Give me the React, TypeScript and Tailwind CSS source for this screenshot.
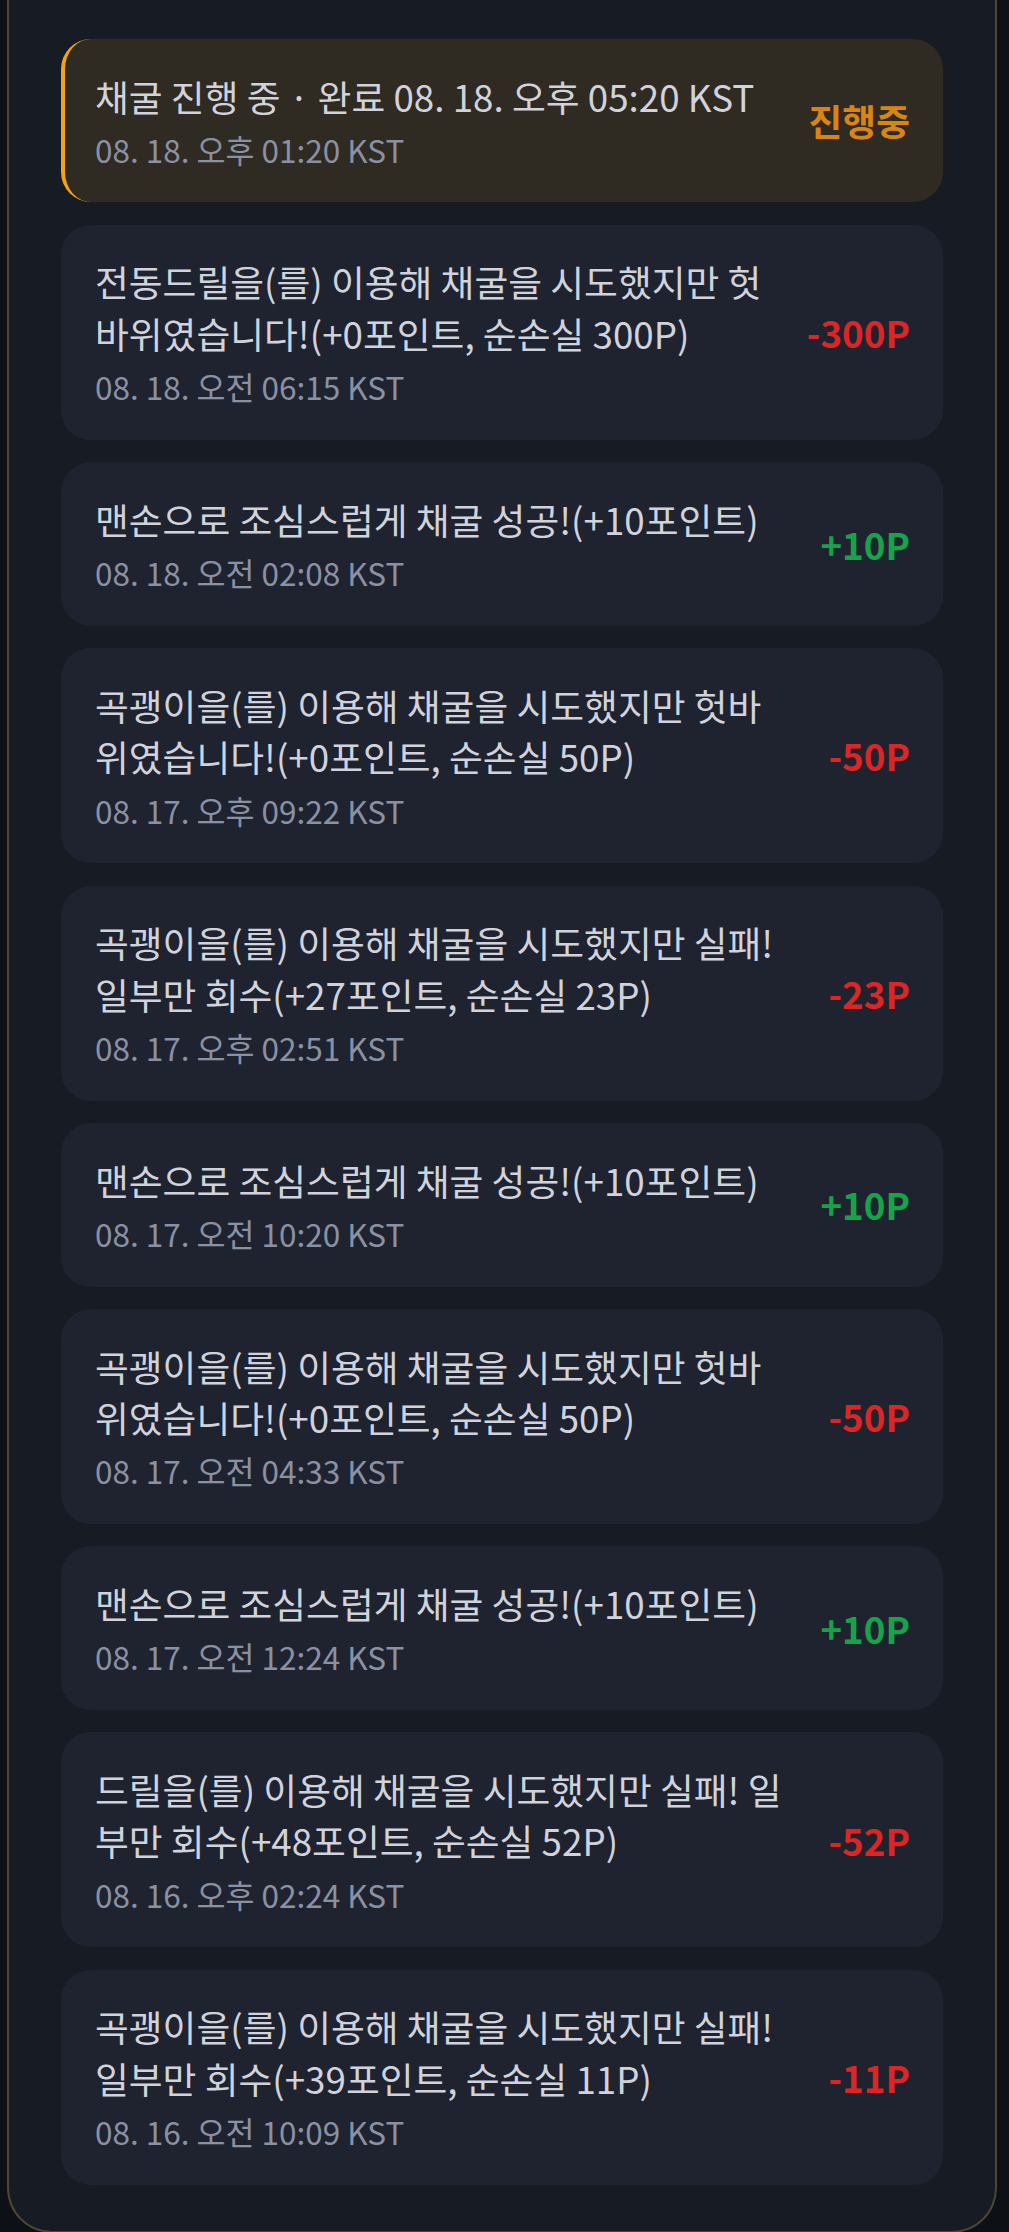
type Entry = {
  text: string
  date: string
  value: string
  kind: 'loss' | 'gain' | 'active'
}

const ENTRIES: Entry[] = [
  { text: '채굴 진행 중 · 완료 08. 18. 오후 05:20 KST', date: '08. 18. 오후 01:20 KST', value: '진행중', kind: 'active' },
  { text: '전동드릴을(를) 이용해 채굴을 시도했지만 헛바위였습니다!(+0포인트, 순손실 300P)', date: '08. 18. 오전 06:15 KST', value: '-300P', kind: 'loss' },
  { text: '맨손으로 조심스럽게 채굴 성공!(+10포인트)', date: '08. 18. 오전 02:08 KST', value: '+10P', kind: 'gain' },
  { text: '곡괭이을(를) 이용해 채굴을 시도했지만 헛바위였습니다!(+0포인트, 순손실 50P)', date: '08. 17. 오후 09:22 KST', value: '-50P', kind: 'loss' },
  { text: '곡괭이을(를) 이용해 채굴을 시도했지만 실패! 일부만 회수(+27포인트, 순손실 23P)', date: '08. 17. 오후 02:51 KST', value: '-23P', kind: 'loss' },
  { text: '맨손으로 조심스럽게 채굴 성공!(+10포인트)', date: '08. 17. 오전 10:20 KST', value: '+10P', kind: 'gain' },
  { text: '곡괭이을(를) 이용해 채굴을 시도했지만 헛바위였습니다!(+0포인트, 순손실 50P)', date: '08. 17. 오전 04:33 KST', value: '-50P', kind: 'loss' },
  { text: '맨손으로 조심스럽게 채굴 성공!(+10포인트)', date: '08. 17. 오전 12:24 KST', value: '+10P', kind: 'gain' },
  { text: '드릴을(를) 이용해 채굴을 시도했지만 실패! 일부만 회수(+48포인트, 순손실 52P)', date: '08. 16. 오후 02:24 KST', value: '-52P', kind: 'loss' },
  { text: '곡괭이을(를) 이용해 채굴을 시도했지만 실패! 일부만 회수(+39포인트, 순손실 11P)', date: '08. 16. 오전 10:09 KST', value: '-11P', kind: 'loss' },
]

const VALUE_COLOR: Record<Entry['kind'], string> = {
  loss: 'text-[#dc2626]',
  gain: 'text-[#16a34a]',
  active: 'text-[#d98512]',
}

function LogCard({ entry }: { entry: Entry }) {
  const active = entry.kind === 'active'
  return (
    <div
      className={`flex items-center justify-between gap-[42px] rounded-[30px] pr-[33px] pt-[31.5px] pb-[31.5px] ${
        active ? 'bg-[#2f2a22] border-l-4 border-[#f5a316] pl-[30px]' : 'bg-[#1f2330] pl-[34px]'
      }`}
    >
      <div className="min-w-0 flex-1">
        <p className="text-[36.75px] leading-[51.45px] text-[#d0d3db]">{entry.text}</p>
        <p className="mt-[5px] text-[31.5px] leading-[44px] text-[#8a91a3]">{entry.date}</p>
      </div>
      <span className={`shrink-0 text-[36.75px] font-bold leading-none ${VALUE_COLOR[entry.kind]}`}>
        {entry.value}
      </span>
    </div>
  )
}

export default function App() {
  return (
    <div
      className="min-h-[2232px] overflow-hidden bg-[#0d1015]"
      style={{ fontFamily: '"Noto Sans CJK KR", "Noto Sans", sans-serif' }}
    >
      <div className="ml-[7px] mr-[12px] rounded-b-[45px] border-x-2 border-b-2 border-[#4f4632] bg-[#171b24] px-[52px] pt-[39px] pb-[46px]">
        <div className="flex flex-col gap-[22.5px]">
          {ENTRIES.map((e, i) => (
            <LogCard key={i} entry={e} />
          ))}
        </div>
      </div>
    </div>
  )
}
